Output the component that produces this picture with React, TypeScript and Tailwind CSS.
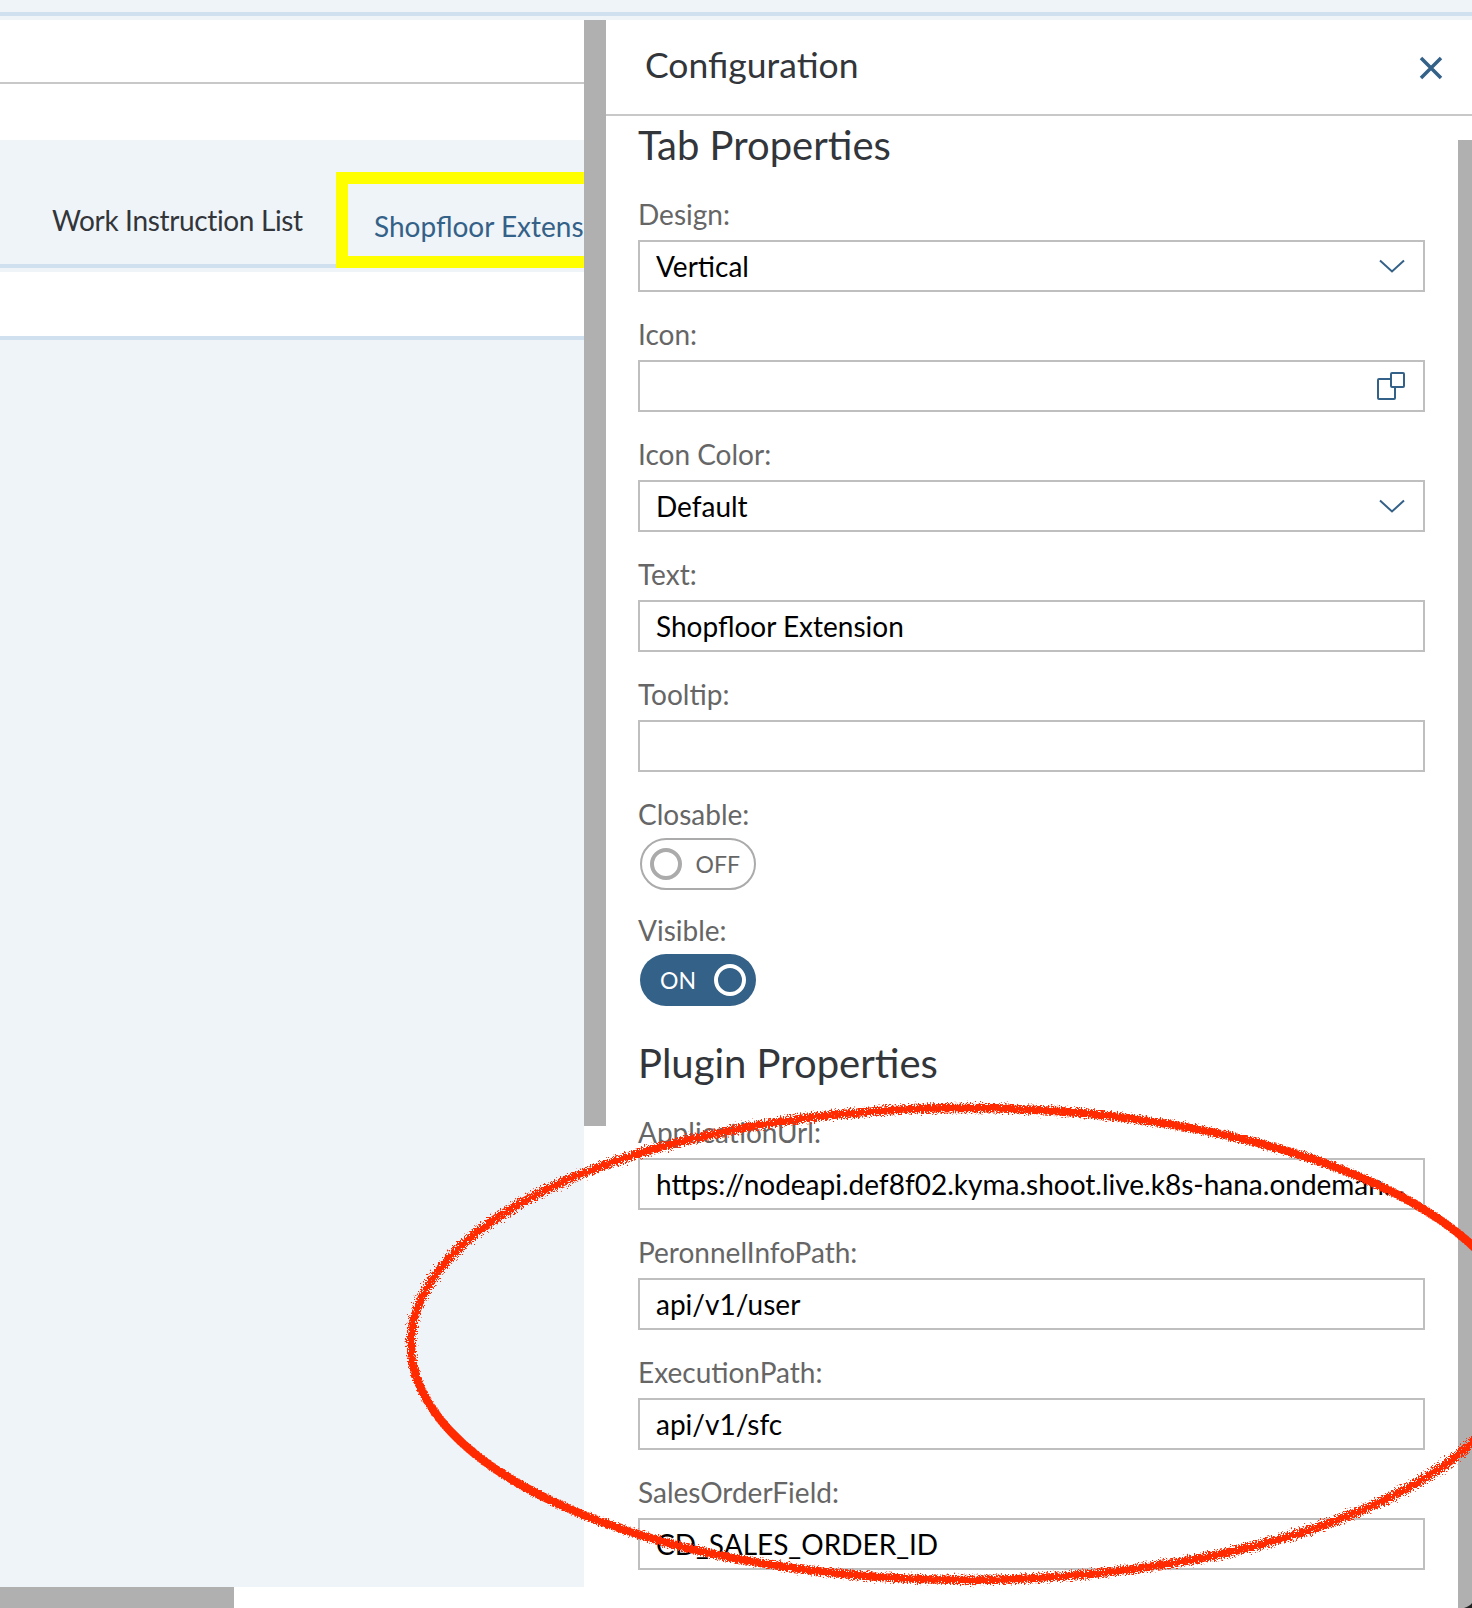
const fieldsTop = [
  { label: "Design:", value: "Vertical", icon: "chevron" },
  { label: "Icon:", value: "", icon: "valueHelp" },
  { label: "Icon Color:", value: "Default", icon: "chevron" },
  { label: "Text:", value: "Shopfloor Extension" },
  { label: "Tooltip:", value: "" },
];

const fieldsPlugin = [
  { label: "ApplicationUrl:", value: "https://nodeapi.def8f02.kyma.shoot.live.k8s-hana.ondemand.com/" },
  { label: "PeronnelInfoPath:", value: "api/v1/user" },
  { label: "ExecutionPath:", value: "api/v1/sfc" },
  { label: "SalesOrderField:", value: "CD_SALES_ORDER_ID" },
];

const Chevron = () => (
  <svg width="26" height="14" viewBox="0 0 26 14" fill="none" stroke="#346187" strokeWidth="2">
    <path d="M1 1.5 13 12.5 25 1.5" />
  </svg>
);

const ValueHelp = () => (
  <svg width="28" height="28" viewBox="0 0 28 28" fill="none" stroke="#346187" strokeWidth="2">
    <rect x="14" y="1" width="13" height="14" rx="1" />
    <path d="M14 7H2a1 1 0 0 0-1 1v18a1 1 0 0 0 1 1h15a1 1 0 0 0 1-1V15" />
  </svg>
);

const Field = ({ label, value, icon }: { label: string; value: string; icon?: string }) => (
  <div className="flex flex-col">
    <div className="flex h-[68px] items-end pb-[10px] text-[28px] leading-[32px] text-[#666666]">{label}</div>
    <div className="flex h-[52px] items-center border-2 border-[#bfbfbf] bg-white pl-[16px] pr-[18px]">
      <span className="min-w-0 flex-1 truncate text-[28px] text-black">{value}</span>
      {icon === "chevron" && <Chevron />}
      {icon === "valueHelp" && <ValueHelp />}
    </div>
  </div>
);

const Toggle = ({ label, on }: { label: string; on: boolean }) => (
  <div className="flex flex-col">
    <div className="flex h-[64px] items-end pb-[8px] text-[28px] leading-[32px] text-[#666666]">{label}</div>
    <div
      className={
        on
          ? "ml-[2px] flex h-[52px] w-[116px] items-center justify-between rounded-full bg-[#346187] pl-[20px] pr-[10px]"
          : "ml-[2px] flex h-[52px] w-[116px] flex-row-reverse items-center justify-between rounded-full border-2 border-[#ababab] bg-white pl-[8px] pr-[14px]"
      }
    >
      <span className={on ? "text-[23px] text-white" : "text-[23px] text-[#666666]"}>{on ? "ON" : "OFF"}</span>
      <span className={on ? "h-[32px] w-[32px] rounded-full border-4 border-white" : "h-[32px] w-[32px] rounded-full border-4 border-[#ababab]"} />
    </div>
  </div>
);

export default function App() {
  return (
    <div className="relative flex h-[1608px] w-[1472px] flex-col overflow-hidden bg-white font-['Lato',sans-serif]">
      <div className="h-[20px] shrink-0 bg-[#eff4f9] pt-[12px]">
        <div className="h-[4px] bg-[#d1e0ee]" />
      </div>

      <div className="flex min-h-0 flex-1">
        {/* left page */}
        <div className="flex w-[584px] shrink-0 flex-col overflow-hidden">
          <div className="h-[64px] shrink-0 border-b-2 border-[#c8c8c8]" />
          <div className="h-[56px] shrink-0" />
          <div className="flex h-[128px] shrink-0 items-end border-b-4 border-[#d1e0ee] bg-[#eff4f9]">
            <div className="flex h-[96px] w-[336px] shrink-0 items-center pt-[8px] pl-[52px] text-[28px] tracking-[-0.35px] whitespace-nowrap text-[#32363a]">
              Work Instruction List
            </div>
            <div className="-mb-[4px] flex h-[96px] flex-1 items-center overflow-hidden border-[12px] border-r-0 border-[#ffff00] pt-[12px] pl-[26px] text-[28px] whitespace-nowrap text-[#346187]">
              Shopfloor Extension
            </div>
          </div>
          <div className="h-[4px] shrink-0 bg-[#eff4f9]" />
          <div className="h-[64px] shrink-0" />
          <div className="h-[4px] shrink-0 bg-[#d1e0ee]" />
          <div className="flex-1 bg-[#eff4f9]" />
          <div className="h-[21px] w-[234px] shrink-0 bg-[#b0b0b0]" />
        </div>

        {/* splitter */}
        <div className="h-[1106px] w-[22px] shrink-0 bg-[#b0b0b0]" />

        {/* configuration panel */}
        <div className="flex min-w-0 flex-1 flex-col">
          <div className="flex h-[96px] shrink-0 items-center justify-between border-b-2 border-[#c8c8c8] pr-[29px] pl-[39px]">
            <h1 className="-mt-[4px] text-[35.5px] text-[#32363a]">Configuration</h1>
            <svg width="24" height="24" viewBox="0 0 24 24" fill="none" stroke="#346187" strokeWidth="3.5" className="mt-[2px]">
              <path d="M2 2 22 22M22 2 2 22" />
            </svg>
          </div>
          <div className="flex min-h-0 flex-1">
            <div className="min-w-0 flex-1 pr-[33px] pl-[32px]">
              <h2 className="mt-[4px] h-[52px] text-[40px] leading-[50px] text-[#32363a]">Tab Properties</h2>
              {fieldsTop.map((f) => (
                <Field key={f.label} {...f} />
              ))}
              <div className="h-[2px]" />
              <Toggle label="Closable:" on={false} />
              <Toggle label="Visible:" on />
              <h2 className="mt-[32px] h-[52px] text-[40px] leading-[50px] text-[#32363a]">Plugin Properties</h2>
              {fieldsPlugin.map((f) => (
                <Field key={f.label} {...f} />
              ))}
            </div>
            <div className="mt-[24px] w-[14px] shrink-0 bg-[#b0b0b0]" />
          </div>
        </div>
      </div>

      {/* red marker annotation */}
      <svg className="pointer-events-none absolute top-0 left-0" width="1472" height="1608" fill="none">
        <defs>
          <filter id="rough" x="-5%" y="-5%" width="110%" height="110%">
            <feTurbulence type="fractalNoise" baseFrequency="0.7" numOctaves="2" seed="4" />
            <feDisplacementMap in="SourceGraphic" scale="10" />
          </filter>
        </defs>
        <ellipse cx="967" cy="1344" rx="556" ry="236" stroke="#ff2a00" strokeWidth="8.5" filter="url(#rough)" />
        <path d="M1464 1608Q1470 1606 1472 1603V1608Z" fill="#222222" />
      </svg>
    </div>
  );
}
